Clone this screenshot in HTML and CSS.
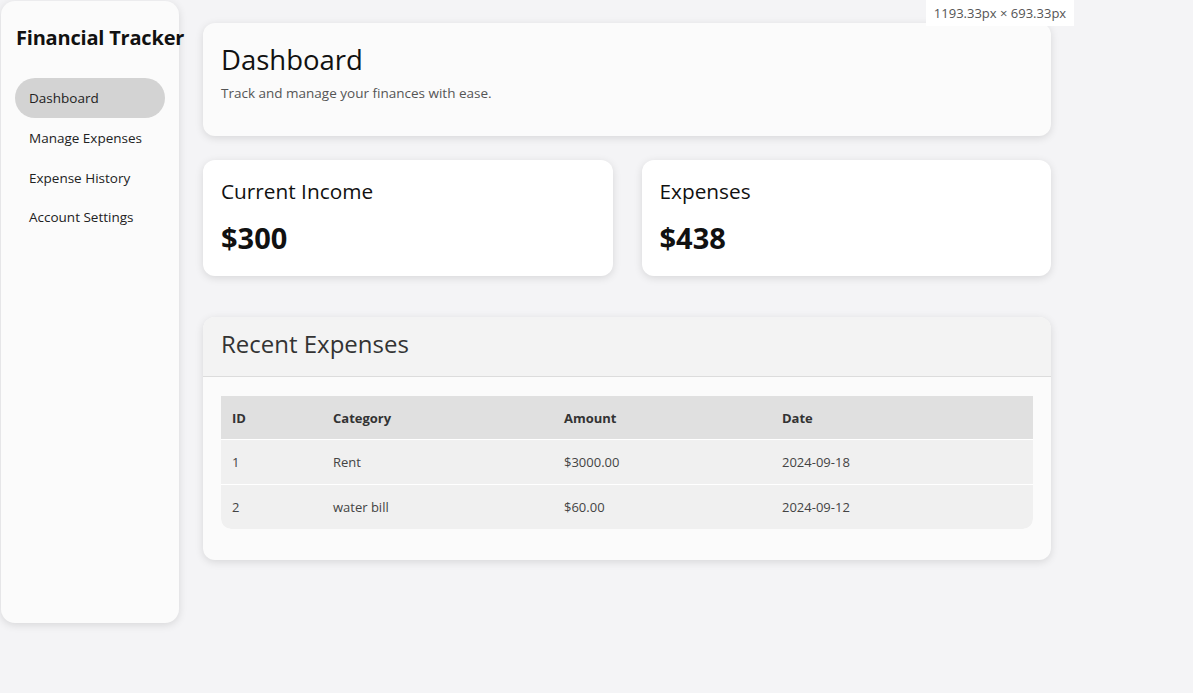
FILE: index.html
```html
<!DOCTYPE html>
<html lang="en">
<head>
<meta charset="utf-8">
<title>Financial Tracker</title>
<link rel="stylesheet" href="styles.css">
</head>
<body>
<div class="layout">
  <aside class="sidebar">
    <h2 class="brand">Financial Tracker</h2>
    <nav class="nav">
      <a class="nav-item active">Dashboard</a>
      <a class="nav-item">Manage Expenses</a>
      <a class="nav-item">Expense History</a>
      <a class="nav-item">Account Settings</a>
    </nav>
  </aside>
  <main class="main">
    <section class="panel header">
      <h1 class="title">Dashboard</h1>
      <p class="subtitle">Track and manage your finances with ease.</p>
    </section>
    <div class="stats">
      <section class="stat">
        <h3 class="stat-label">Current Income</h3>
        <div class="stat-value">$300</div>
      </section>
      <section class="stat">
        <h3 class="stat-label">Expenses</h3>
        <div class="stat-value">$438</div>
      </section>
    </div>
    <section class="panel recent">
      <div class="recent-head"><h2 class="recent-title">Recent Expenses</h2></div>
      <div class="recent-body">
        <table class="table">
          <colgroup><col class="c1"><col class="c2"><col class="c3"><col></colgroup>
          <thead>
            <tr><th>ID</th><th>Category</th><th>Amount</th><th>Date</th></tr>
          </thead>
          <tbody>
            <tr><td>1</td><td>Rent</td><td>$3000.00</td><td>2024-09-18</td></tr>
            <tr><td>2</td><td>water bill</td><td>$60.00</td><td>2024-09-12</td></tr>
          </tbody>
        </table>
      </div>
    </section>
  </main>
</div>
<div class="size-tag">1193.33px × 693.33px</div>
</body>
</html>
```
FILE: styles.css
```css
* { box-sizing: border-box; }
html, body { margin: 0; padding: 0; }
body {
  background: #f4f4f6;
  font-family: "Open Sans", "Noto Sans", sans-serif;
  color: #111;
  height: 693px;
  overflow: hidden;
}
.layout {
  display: flex;
  align-items: flex-start;
  gap: 24px;
  padding: 1px 0 0 1px;
}
.sidebar {
  width: 178px;
  height: 622px;
  background: #fbfbfb;
  border-radius: 14px;
  box-shadow: 0 2px 8px rgba(0,0,0,0.12);
  padding: 23px 14px 0 14px;
  flex-shrink: 0;
}
.brand {
  margin: 0 0 27px 1px;
  font-size: 20px;
  font-weight: 700;
  white-space: nowrap;
  letter-spacing: -0.2px;
}
.nav { display: flex; flex-direction: column; }
.nav-item {
  display: block;
  height: 40px;
  line-height: 40px;
  padding: 0 14px;
  border-radius: 20px;
  font-size: 13.5px;
  color: #222;
  width: 150px;
  white-space: nowrap;
}
.nav-item.active { background: #d3d3d3; }
.nav-item + .nav-item + .nav-item + .nav-item { height: 38px; line-height: 38px; }
.main {
  width: 848px;
  padding-top: 22px;
  display: flex;
  flex-direction: column;
}
.panel {
  background: #fbfbfb;
  border-radius: 12px;
  box-shadow: 0 2px 8px rgba(0,0,0,0.12);
}
.header {
  height: 113px;
  padding: 17px 18px;
}
.title {
  margin: 0;
  font-size: 27.5px;
  font-weight: 400;
  line-height: 40px;
}
.subtitle {
  margin: 4px 0 0;
  font-size: 13.5px;
  color: #555;
}
.stats {
  display: flex;
  gap: 29px;
  margin-top: 24px;
}
.stat {
  flex: 1;
  height: 116px;
  background: #fff;
  border-radius: 12px;
  box-shadow: 0 2px 8px rgba(0,0,0,0.12);
  padding: 16px 18px 16px;
}
.stat-label {
  margin: 0;
  font-size: 20.8px;
  font-weight: 400;
  line-height: 30px;
}
.stat-value {
  margin-top: 14px;
  font-size: 29px;
  font-weight: 700;
  line-height: 36px;
}
.recent {
  margin-top: 41px;
  height: 243px;
  overflow: hidden;
}
.recent-head {
  height: 60px;
  background: #f3f3f3;
  border-bottom: 1px solid #dcdcdc;
  padding: 9px 18px 0;
}
.recent-title {
  margin: 0;
  font-size: 24px;
  font-weight: 400;
  line-height: 36px;
  color: #333;
}
.recent-body { padding: 19px 18px 32px; }
.table {
  width: 100%;
  border-collapse: separate;
  border-spacing: 0;
  border-radius: 0 0 10px 10px;
  overflow: hidden;
  font-size: 13px;
}
.c1 { width: 101px; }
.c2 { width: 231px; }
.c3 { width: 218px; }
.table th {
  background: #e0e0e0;
  text-align: left;
  font-weight: 700;
  color: #333;
  height: 44px;
  padding: 0 11px;
  border-bottom: 1px solid #fff;
}
.table td {
  background: #f0f0f0;
  color: #444;
  height: 44px;
  padding: 0 11px;
}
.table tbody tr:first-child td { border-bottom: 1px solid #fff; height: 45px; }
.table tbody tr:last-child td:first-child { border-bottom-left-radius: 10px; }
.table tbody tr:last-child td:last-child { border-bottom-right-radius: 10px; }
.size-tag {
  position: absolute;
  top: 0;
  left: 926px;
  width: 148px;
  height: 26px;
  background: #fff;
  color: #555;
  font-size: 13px;
  line-height: 26px;
  text-align: center;
}
```
